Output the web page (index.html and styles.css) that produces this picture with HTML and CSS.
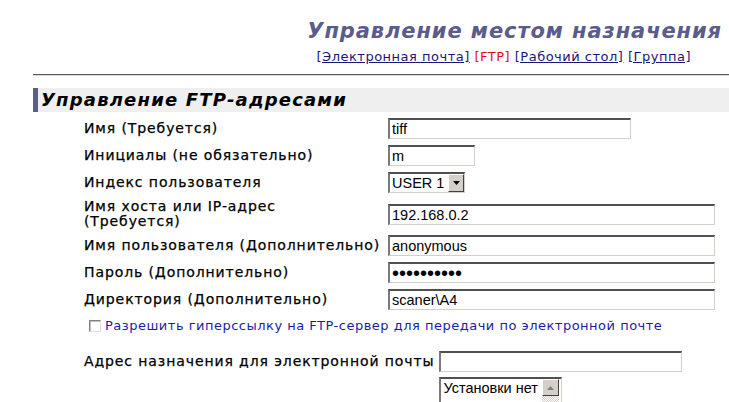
FILE: index.html
```html
<!DOCTYPE html>
<html lang="ru">
<head>
<meta charset="utf-8">
<title>Управление местом назначения</title>
<link rel="stylesheet" href="styles.css">
</head>
<body>
<header class="top">
  <h1 class="title">Управление местом назначения</h1>
  <nav class="nav">
    <a href="#">[Электронная почта]</a> <span class="cur">[FTP]</span> <a href="#">[Рабочий стол]</a> <a href="#">[Группа]</a>
  </nav>
</header>
<div class="rule"></div>
<main class="main">
  <h2 class="section">Управление FTP-адресами</h2>
  <div class="form">
    <label class="lbl">Имя (Требуется)</label>
    <div class="fld"><input class="inp w243" type="text" value="tiff"></div>

    <label class="lbl">Инициалы (не обязательно)</label>
    <div class="fld"><input class="inp w87" type="text" value="m"></div>

    <label class="lbl">Индекс пользователя</label>
    <div class="fld">
      <div class="select">
        <span class="sel-text">USER 1</span>
        <span class="sel-btn"><svg width="7" height="4" viewBox="0 0 7 4"><path d="M0 0h7L3.5 4z" fill="#000"/></svg></span>
      </div>
    </div>

    <label class="lbl two">Имя хоста или IP-адрес<br>(Требуется)</label>
    <div class="fld"><input class="inp w327" type="text" value="192.168.0.2"></div>

    <label class="lbl">Имя пользователя (Дополнительно)</label>
    <div class="fld"><input class="inp w327" type="text" value="anonymous"></div>

    <label class="lbl">Пароль (Дополнительно)</label>
    <div class="fld"><input class="inp w327 pwd" type="password" value="aaaaaaaaaa"></div>

    <label class="lbl">Директория (Дополнительно)</label>
    <div class="fld"><input class="inp w327" type="text" value="scaner\A4"></div>
  </div>

  <div class="check-row">
    <span class="cb"></span>
    <span class="cb-text">Разрешить гиперссылку на FTP-сервер для передачи по электронной почте</span>
  </div>

  <div class="mail-row">
    <label class="lbl">Адрес назначения для электронной почты</label>
    <div class="mail-fields">
      <input class="inp w243" type="text" value="">
      <div class="listbox">
        <span class="lb-text">Установки нет</span>
        <span class="lb-scroll">
          <span class="lb-up"><svg width="7" height="4" viewBox="0 0 7 4"><path d="M3.5 0L7 4H0z" fill="#808080"/></svg></span>
          <span class="lb-track"></span>
        </span>
      </div>
    </div>
  </div>
</main>
</body>
</html>
```

FILE: styles.css
```css
html, body {
  margin: 0;
  padding: 0;
  background: #fff;
  overflow: hidden;
}
body {
  font-family: "DejaVu Sans", Verdana, sans-serif;
  color: #000;
}
.top {
  display: flex;
  flex-direction: column;
  align-items: flex-end;
  padding-top: 18px;
}
.title {
  margin: 0 7px 0 0;
  font-size: 21px;
  font-weight: bold;
  font-style: italic;
  letter-spacing: 0.9px;
  color: #5b5b8c;
  line-height: 26px;
}
.nav {
  margin: 5px 38px 0 0;
  font-size: 13px;
  letter-spacing: 0.5px;
  line-height: 16px;
}
.nav a {
  color: #17177a;
  text-decoration: underline;
}
.nav .cur {
  color: #e01010;
}
.rule {
  margin: 9px 0 0 33px;
  border-top: 1px solid #5a5a5a;
  border-bottom: 1px solid #d8d8d8;
}
.main {
  margin-left: 33px;
}
.section {
  margin: 12px 0 0 0;
  height: 24px;
  line-height: 24px;
  background: #efefef;
  border-left: 5px solid #5b5b8c;
  padding-left: 3px;
  font-size: 18px;
  letter-spacing: 1.2px;
  font-weight: bold;
  font-style: italic;
  color: #000;
}
.form {
  display: grid;
  grid-template-columns: 304px auto;
  row-gap: 6px;
  align-items: center;
  margin: 6px 0 0 51px;
}
.lbl {
  font-size: 14px;
  letter-spacing: 0.9px;
  line-height: 15px;
  white-space: nowrap;
  -webkit-text-stroke: 0.25px #000;
}
.fld {
  display: flex;
}
.inp {
  box-sizing: border-box;
  height: 21px;
  margin: 0;
  padding: 0 2px;
  border-style: solid;
  border-width: 2px 1px 1px 2px;
  border-color: #505050 #d4d0c8 #d4d0c8 #7a7a7a;
  background: #fff;
  font-family: "Liberation Sans", Arial, sans-serif;
  font-size: 14.5px;
  color: #000;
  outline: none;
}
.w243 { width: 243px; }
.w87 { width: 87px; }
.w327 { width: 327px; }
.pwd {
  font-size: 20px;
  letter-spacing: 0;
}
.select {
  box-sizing: border-box;
  width: 77px;
  height: 21px;
  display: flex;
  align-items: stretch;
  border-style: solid;
  border-width: 2px 1px 1px 2px;
  border-color: #505050 #d4d0c8 #d4d0c8 #7a7a7a;
  background: #fff;
}
.sel-text {
  flex: 1;
  padding-left: 2px;
  font-family: "Liberation Sans", Arial, sans-serif;
  font-size: 14.5px;
  line-height: 18px;
}
.sel-btn {
  box-sizing: border-box;
  width: 16px;
  display: flex;
  align-items: center;
  justify-content: center;
  background: #d4d0c8;
  border-style: solid;
  border-width: 1px;
  border-color: #fff #404040 #404040 #fff;
}
.check-row {
  display: flex;
  align-items: center;
  margin: 8px 0 0 56px;
  height: 15px;
}
.cb {
  box-sizing: border-box;
  width: 12px;
  height: 12px;
  border-style: solid;
  border-width: 1px;
  border-color: #808080 #e0e0e0 #e0e0e0 #808080;
  box-shadow: inset 1px 1px 0 #c0c0c0;
  background: #fff;
  margin-right: 4px;
}
.cb-text {
  font-size: 13px;
  letter-spacing: 0.5px;
  color: #1c1ca8;
}
.mail-row {
  display: flex;
  align-items: flex-start;
  margin: 18px 0 0 51px;
}
.mail-row .lbl {
  line-height: 21px;
  margin-right: 5px;
}
.mail-fields {
  display: flex;
  flex-direction: column;
  gap: 5px;
}
.listbox {
  box-sizing: border-box;
  width: 123px;
  height: 44px;
  display: flex;
  border-style: solid;
  border-width: 2px 1px 1px 2px;
  border-color: #505050 #d4d0c8 #d4d0c8 #7a7a7a;
  background: #fff;
}
.lb-text {
  flex: 1;
  padding-left: 2px;
  font-family: "Liberation Sans", Arial, sans-serif;
  font-size: 14.5px;
  line-height: 18px;
  white-space: nowrap;
}
.lb-scroll {
  width: 17px;
  display: flex;
  flex-direction: column;
  margin-right: 2px;
}
.lb-up {
  box-sizing: border-box;
  height: 17px;
  display: flex;
  align-items: center;
  justify-content: center;
  background: #d4d0c8;
  border-style: solid;
  border-width: 1px;
  border-color: #fff #404040 #404040 #fff;
}
.lb-track {
  flex: 1;
  background: repeating-conic-gradient(#d4d0c8 0 25%, #fff 0 50%) 0 0 / 2px 2px;
}
```
